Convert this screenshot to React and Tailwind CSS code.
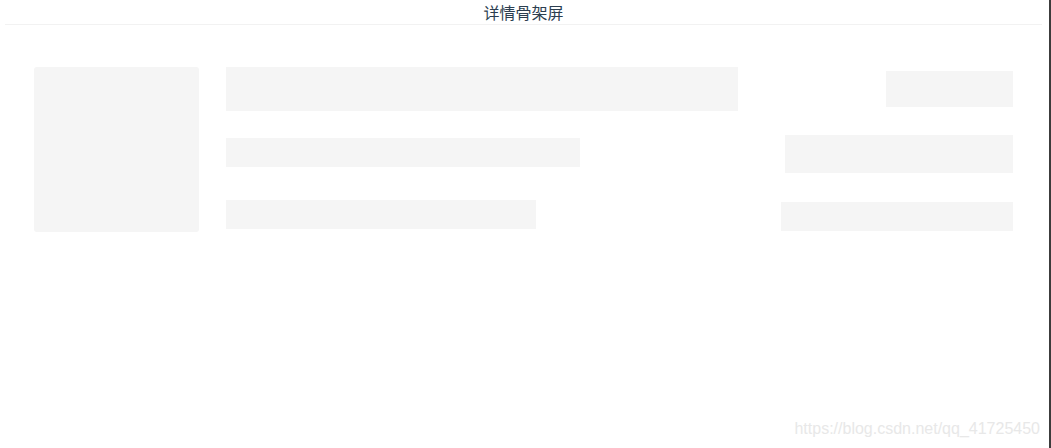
import React from 'react';

const Bar = ({ className }) => <div className={`bg-[#f5f5f5] ${className}`} />;

const App = () => {
  return (
    <div className="relative w-[1051px] h-[448px] bg-white overflow-hidden font-['Liberation_Sans','Noto_Sans_CJK_SC',sans-serif]">
      <div className="w-[1051px] h-full border-r-2 border-[#3c3c3c]">
        {/* Header */}
        <div className="mx-[5px] w-[1037px] border-b border-[#f2f2f2] text-center text-[16px] leading-[24px] text-[#2c3e50] font-['Noto_Sans_CJK_SC',sans-serif]">
          详情骨架屏
        </div>

        {/* Skeleton */}
        <div className="flex pl-[34px] pr-[36px] pt-[42px]">
          <div className="w-[165px] h-[165px] rounded-[3px] bg-[#f5f5f5] shrink-0" />

          <div className="flex flex-col ml-[27px]">
            <Bar className="w-[512px] h-[44px]" />
            <Bar className="w-[354px] h-[29px] mt-[27px]" />
            <Bar className="w-[310px] h-[29px] mt-[33px]" />
          </div>

          <div className="flex flex-col items-end flex-1">
            <Bar className="w-[127px] h-[36px] mt-[4px]" />
            <Bar className="w-[228px] h-[38px] mt-[28px]" />
            <Bar className="w-[232px] h-[29px] mt-[29px]" />
          </div>
        </div>
      </div>

      {/* Watermark */}
      <div className="absolute right-[11px] bottom-[9px] text-[16px] leading-[20px] text-[#e8e8e8] font-['Liberation_Sans',sans-serif]">
        https://blog.csdn.net/qq_41725450
      </div>
    </div>
  );
};

export default App;
